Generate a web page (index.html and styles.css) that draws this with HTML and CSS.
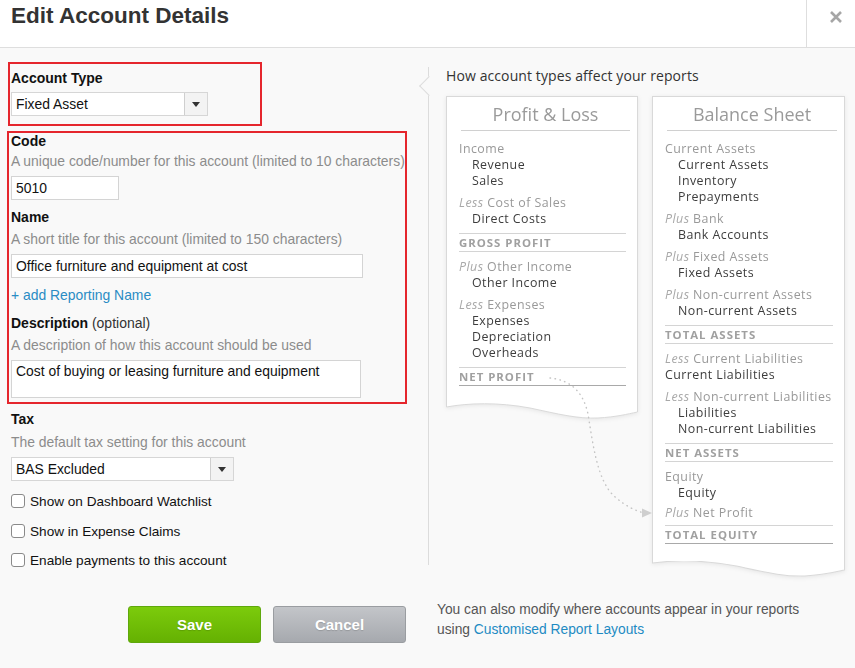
FILE: index.html
```html
<!DOCTYPE html>
<html lang="en">
<head>
  <meta charset="UTF-8">
  <meta name="viewport" content="width=device-width, initial-scale=1.0">
  <title>Edit Account Details</title>
  <link rel="stylesheet" href="styles.css">
</head>
<body>
  <div class="dialog-header">
    <h1>Edit Account Details</h1>
    <button type="button" class="close" aria-label="Close">
      <svg width="12" height="12" viewBox="0 0 12 12"><path d="M1 1L11 11M11 1L1 11" stroke="#a6a6a6" stroke-width="2.6"/></svg>
    </button>
  </div>

  <div class="dialog-body">
    <form class="account-form">
      <div class="highlight type-box">
        <div class="field-label">Account Type</div>
        <div class="select select-type">
          <span class="select-value">Fixed Asset</span>
          <span class="select-btn"></span>
        </div>
      </div>

      <div class="highlight details-box">
        <label class="field-label" for="code">Code</label>
        <div class="hint hint-first">A unique code/number for this account (limited to 10 characters)</div>
        <input type="text" id="code" class="text-input code-input" value="5010">

        <label class="field-label next-field" for="name">Name</label>
        <div class="hint">A short title for this account (limited to 150 characters)</div>
        <input type="text" id="name" class="text-input name-input" value="Office furniture and equipment at cost">
        <a href="#" class="add-link">+ add Reporting Name</a>

        <label class="field-label desc-label" for="desc">Description <span class="optional">(optional)</span></label>
        <div class="hint">A description of how this account should be used</div>
        <textarea id="desc" class="text-input desc-input">Cost of buying or leasing furniture and equipment</textarea>
      </div>

      <div class="plain">
        <div class="field-label tax-label">Tax</div>
        <div class="hint hint-tax">The default tax setting for this account</div>
        <div class="select select-tax">
          <span class="select-value">BAS Excluded</span>
          <span class="select-btn"></span>
        </div>

        <label class="check first-check"><input type="checkbox"> Show on Dashboard Watchlist</label>
        <label class="check"><input type="checkbox"> Show in Expense Claims</label>
        <label class="check last-check"><input type="checkbox"> Enable payments to this account</label>
      </div>
    </form>

    <div class="reports">
      <div class="reports-title">How account types affect your reports</div>
      <div class="papers">
        <div class="paper paper-pl">
          <div class="paper-body">
            <div class="paper-title">Profit &amp; Loss</div>
            <div class="group">
              <div class="cat">Income</div>
              <div class="item">Revenue</div>
              <div class="item">Sales</div>
            </div>
            <div class="group">
              <div class="cat"><em>Less</em> Cost of Sales</div>
              <div class="item">Direct Costs</div>
            </div>
            <div class="total">Gross Profit</div>
            <div class="group">
              <div class="cat"><em>Plus</em> Other Income</div>
              <div class="item">Other Income</div>
            </div>
            <div class="group">
              <div class="cat"><em>Less</em> Expenses</div>
              <div class="item">Expenses</div>
              <div class="item">Depreciation</div>
              <div class="item">Overheads</div>
            </div>
            <div class="total total-last">Net Profit</div>
          </div>
          <svg class="wave" viewBox="0 0 192 17" preserveAspectRatio="none">
            <path d="M0 0V4C22 0 52 -1 84 5C112 11 132 16 152 15C170 14 182 11 192 9V0Z" fill="#fff"/>
            <path d="M0.5 0V4C22 0 52 -1 84 5C112 11 132 16 152 15C170 14 182 11 191.5 9V0" fill="none" stroke="#d9d9d9"/>
          </svg>
        </div>

        <div class="paper paper-bs">
          <div class="paper-body">
            <div class="paper-title">Balance Sheet</div>
            <div class="group">
              <div class="cat">Current Assets</div>
              <div class="item">Current Assets</div>
              <div class="item">Inventory</div>
              <div class="item">Prepayments</div>
            </div>
            <div class="group">
              <div class="cat"><em>Plus</em> Bank</div>
              <div class="item">Bank Accounts</div>
            </div>
            <div class="group">
              <div class="cat"><em>Plus</em> Fixed Assets</div>
              <div class="item">Fixed Assets</div>
            </div>
            <div class="group">
              <div class="cat"><em>Plus</em> Non-current Assets</div>
              <div class="item">Non-current Assets</div>
            </div>
            <div class="total">Total Assets</div>
            <div class="group">
              <div class="cat"><em>Less</em> Current Liabilities</div>
              <div class="item flat">Current Liabilities</div>
            </div>
            <div class="group">
              <div class="cat"><em>Less</em> Non-current Liabilities</div>
              <div class="item">Liabilities</div>
              <div class="item">Non-current Liabilities</div>
            </div>
            <div class="total">Net Assets</div>
            <div class="group">
              <div class="cat">Equity</div>
              <div class="item">Equity</div>
            </div>
            <div class="group group-tight">
              <div class="cat"><em>Plus</em> Net Profit</div>
            </div>
            <div class="total total-tight total-last">Total Equity</div>
          </div>
          <svg class="wave" viewBox="0 0 192 17" preserveAspectRatio="none">
            <path d="M0 0V2C22 -1 52 -1 84 5C112 11 132 16 152 15C170 14 182 11 192 9V0Z" fill="#fff"/>
            <path d="M0.5 0V2C22 -1 52 -1 84 5C112 11 132 16 152 15C170 14 182 11 191.5 9V0" fill="none" stroke="#d9d9d9"/>
          </svg>
        </div>

        <!-- dotted link from net profit to the balance sheet -->
        <svg class="connector" width="220" height="430" viewBox="0 0 220 430">
          <path d="M104 282C124 284 137 295 142 318C147 348 151 384 168 400C179 410 190 415 198 417" fill="none" stroke="#c4c4c4" stroke-width="1.4" stroke-linecap="round" stroke-dasharray="0.5 4.5"/>
          <path d="M196 412.5L206 417L196 421.5Z" fill="#cfcfcf"/>
        </svg>
      </div>
    </div>
  </div>

  <div class="dialog-footer">
    <button type="button" class="btn btn-save">Save</button>
    <button type="button" class="btn btn-cancel">Cancel</button>
    <p class="footer-note">You can also modify where accounts appear in your reports<br>using <a href="#">Customised Report Layouts</a></p>
  </div>
</body>
</html>
```

FILE: styles.css
```css
body {
  margin: 0;
  background-color: #f9f9f9;
  font-family: "Liberation Sans", Arial, sans-serif;
  font-size: 13px;
  color: #222;
}

/* header */
.dialog-header {
  display: flex;
  justify-content: space-between;
  height: 48px;
  box-sizing: border-box;
  background: #fff;
  border-bottom: 1px solid #dedede;
}
.dialog-header h1 {
  margin: 5px 0 0 11px;
  font-size: 22.5px;
  line-height: 22px;
  font-weight: bold;
  color: #333;
}
.close {
  width: 49px;
  height: 47px;
  padding: 11px 0 0 10px;
  border: none;
  border-left: 1px solid #dedede;
  background: transparent;
  display: flex;
  justify-content: center;
  align-items: flex-start;
  cursor: pointer;
}

/* body */
.dialog-body {
  display: flex;
  padding-top: 14px;
}
.account-form {
  width: 428px;
  padding-left: 7px;
  box-sizing: border-box;
  margin: 0;
}
.highlight {
  border: 2px solid #e5262d;
}
.type-box {
  width: 254px;
  box-sizing: border-box;
  margin-left: 1px;
  padding: 6px 0 8px 1px;
}
.details-box {
  width: 400px;
  box-sizing: border-box;
  margin-top: 5px;
  padding: 0 0 4px 2px;
}
.plain {
  padding-left: 4px;
}

.field-label {
  display: block;
  font-size: 14px;
  line-height: 16px;
  font-weight: bold;
  color: #111;
}
.optional {
  font-weight: normal;
  color: #333;
}
.next-field {
  margin-top: 9px;
}
.desc-label {
  margin-top: 12px;
}
.tax-label {
  margin-top: 7px;
}
.hint {
  margin-top: 6px;
  line-height: 16px;
  font-size: 13.9px;
  color: #8c8c8c;
  white-space: nowrap;
}
.hint-first {
  margin-top: 4px;
}
.hint-tax {
  margin-top: 7px;
}

.text-input {
  display: block;
  margin-top: 7px;
  height: 24px;
  box-sizing: border-box;
  border: 1px solid #d4d4d4;
  background: #fff;
  padding: 0 4px;
  font-family: "Liberation Sans", Arial, sans-serif;
  font-size: 13.9px;
  color: #111;
}
.code-input {
  width: 108px;
}
.name-input {
  width: 352px;
}
.desc-input {
  width: 350px;
  height: 38px;
  padding-top: 2px;
  resize: none;
  line-height: 16px;
}
.add-link {
  display: block;
  margin-top: 9px;
  line-height: 16px;
  font-size: 13.9px;
  color: #2a8cc4;
  text-decoration: none;
}

.select {
  display: flex;
  margin-top: 6px;
  height: 24px;
  box-sizing: border-box;
  border: 1px solid #d6d6d6;
  background: #fff;
}
.select-type {
  width: 197px;
}
.select-tax {
  width: 223px;
  margin-top: 7px;
}
.select-value {
  flex: 1;
  padding-left: 4px;
  line-height: 22px;
  font-size: 13.9px;
  color: #111;
}
.select-btn {
  position: relative;
  width: 22px;
  border-left: 1px solid #cfcfcf;
  background: #f3f3f3;
}
.select-btn::after {
  content: "";
  position: absolute;
  left: 7px;
  top: 9px;
  border-left: 4px solid transparent;
  border-right: 4px solid transparent;
  border-top: 5px solid #333;
}

.check {
  display: flex;
  align-items: center;
  gap: 5px;
  height: 20px;
  margin-top: 10px;
  font-size: 13.6px;
  color: #111;
}
.first-check {
  margin-top: 10px;
}
.last-check {
  margin-top: 9px;
}
.check input {
  appearance: none;
  margin: 0;
  width: 14px;
  height: 14px;
  border: 1px solid #8a8a8a;
  border-radius: 3px;
  background: #fff;
}

/* reports panel */
.reports {
  position: relative;
  margin-top: 5px;
  height: 498px;
  padding-left: 17px;
  border-left: 1px solid #dcdcdc;
  font-family: "Open Sans", sans-serif;
}
.reports::before {
  content: "";
  position: absolute;
  left: -7px;
  top: 12px;
  width: 13px;
  height: 13px;
  background: #f9f9f9;
  border-left: 1px solid #dcdcdc;
  border-bottom: 1px solid #dcdcdc;
  transform: rotate(45deg);
}
.reports-title {
  line-height: 18px;
  font-size: 14px;
  letter-spacing: 0.1px;
  color: #333;
}
.papers {
  position: relative;
  display: flex;
  align-items: flex-start;
  gap: 14px;
  margin-top: 11px;
}
.paper {
  width: 192px;
  filter: drop-shadow(0 1px 2px rgba(0, 0, 0, 0.08));
}
.paper-bs {
  width: 193px;
}
.paper-body {
  background: #fff;
  border: 1px solid #d9d9d9;
  border-bottom: none;
  padding: 0 11px 18px 12px;
}
.paper-title {
  margin: 0 -4px 0 2px;
  padding: 5px 0 4px;
  line-height: 24px;
  text-align: center;
  font-size: 18px;
  color: #9a9a9a;
  border-bottom: 1px solid #d0d0d0;
}
.wave {
  display: block;
  width: 100%;
  height: 17px;
  margin-top: -1px;
}

.group {
  margin-top: 6px;
  font-size: 12.4px;
  line-height: 16px;
  letter-spacing: 0.45px;
}
.paper-title + .group {
  margin-top: 10px;
}
.total + .group {
  margin-top: 7px;
}
.group-tight {
  margin-top: 4px;
}
.cat {
  color: #999;
}
.cat em {
  color: #a8a8a8;
}
.item {
  padding-left: 13px;
  color: #3d3d3d;
}
.item.flat {
  padding-left: 0;
}
.total {
  margin-top: 6px;
  line-height: 17px;
  font-size: 11.4px;
  font-weight: bold;
  letter-spacing: 1px;
  text-transform: uppercase;
  color: #a0a0a0;
  border-top: 1px solid #d4d4d4;
  border-bottom: 1px solid #d4d4d4;
}
.total-tight {
  margin-top: 4px;
}
.total-last {
  border-bottom-color: #a9a9a9;
}
.connector {
  position: absolute;
  left: 0;
  top: 0;
  pointer-events: none;
}

/* footer */
.dialog-footer {
  display: flex;
  align-items: flex-start;
  padding: 36px 0 0 128px;
}
.btn {
  width: 133px;
  height: 37px;
  margin-right: 12px;
  border-radius: 3px;
  font-family: "Liberation Sans", Arial, sans-serif;
  font-size: 15px;
  font-weight: bold;
  color: #fff;
  text-shadow: 0 1px 1px rgba(0, 0, 0, 0.15);
  cursor: pointer;
}
.btn-save {
  border: 1px solid #5fa80c;
  background: linear-gradient(#7ccb0c, #65b102);
}
.btn-cancel {
  border: 1px solid #9a9da1;
  background: linear-gradient(#c3c5c9, #a6a9ae);
}
.footer-note {
  margin: -6px 0 0 19px;
  line-height: 20px;
  font-size: 13.8px;
  color: #555;
}
.footer-note a {
  color: #1e8bc3;
  text-decoration: none;
}
```
